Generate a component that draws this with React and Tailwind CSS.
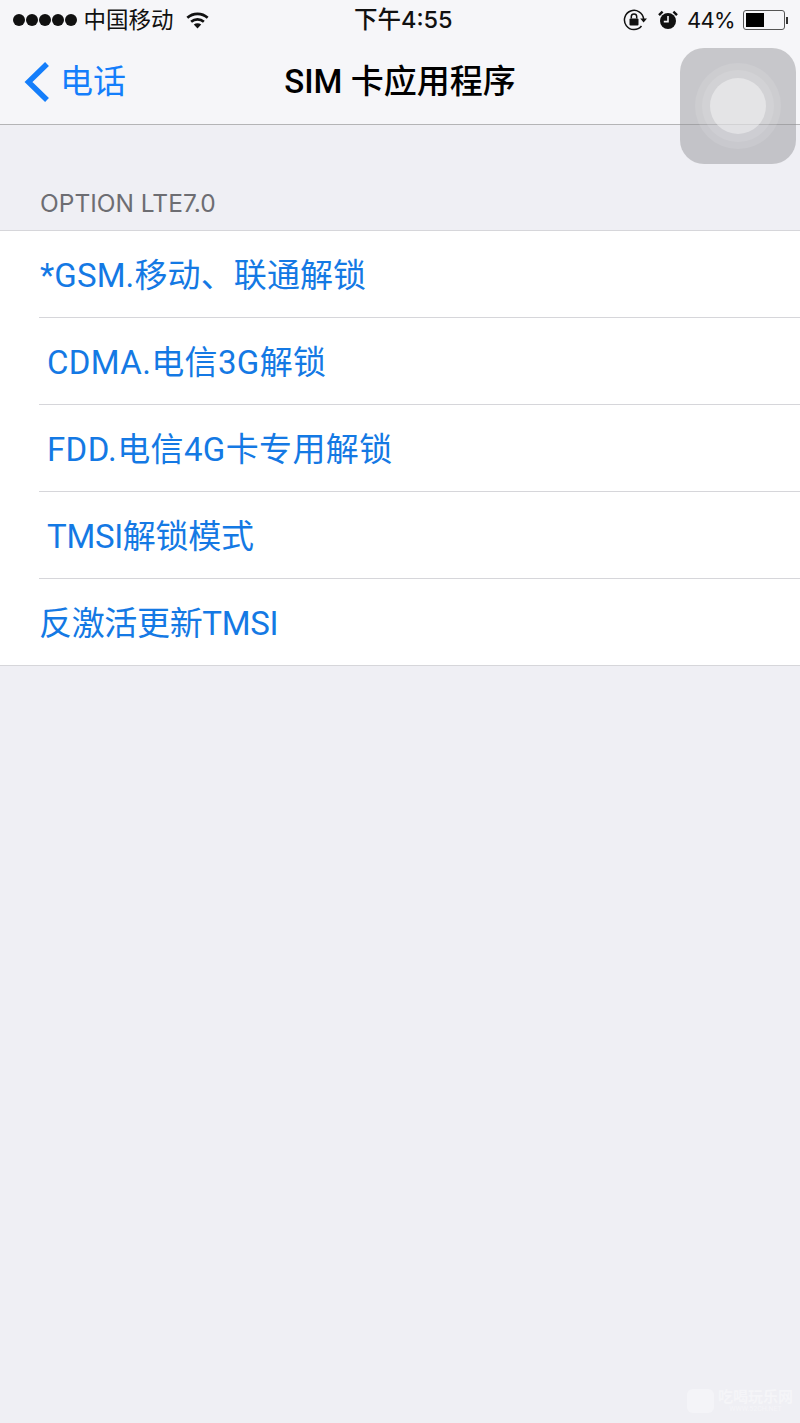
const FONT = 'font-["Roboto","Noto_Sans_CJK_SC",sans-serif]'

const rows = [
  { label: '*GSM.移动、联通解锁', pad: 'pl-[1px]', track: 'tracking-[0.12px]' },
  { label: 'CDMA.电信3G解锁', pad: 'pl-[8px]', track: 'tracking-[0.35px]' },
  { label: 'FDD.电信4G卡专用解锁', pad: 'pl-[8px]', track: 'tracking-[0.38px]' },
  { label: 'TMSI解锁模式', pad: 'pl-[8px]', track: 'tracking-[-0.3px]' },
  { label: '反激活更新TMSI', pad: 'pl-0', track: 'tracking-[-0.33px]' },
]

function Wifi() {
  return (
    <svg width="23" height="18" viewBox="0 0 26 20" fill="none" stroke="#111" strokeWidth="3">
      <path d="M1.5 7.5C8 1.5 18 1.5 24.5 7.5" />
      <path d="M5.8 12C10 8.3 16 8.3 20.2 12" />
      <path d="M13 19.5L8.8 15C11.2 13.2 14.8 13.2 17.2 15Z" fill="#111" stroke="none" />
    </svg>
  )
}

function RotationLock() {
  return (
    <svg width="24" height="22" viewBox="0 0 24 22" fill="none">
      <path d="M18.5 17A9.6 9.6 0 1 1 20.6 10" stroke="#111" strokeWidth="1.5" />
      <path d="M17.2 9.5H24L20.6 13.4Z" fill="#111" />
      <rect x="6.5" y="9.5" width="9" height="7" rx="1" fill="#111" />
      <path d="M8.3 9.5V7.6a2.7 2.7 0 0 1 5.4 0v1.9" stroke="#111" strokeWidth="1.5" />
    </svg>
  )
}

function Alarm() {
  return (
    <svg width="20" height="20" viewBox="0 0 20 20">
      <circle cx="10" cy="11" r="8" fill="#111" />
      <path d="M1 5.2L4.6 1.6 M15.4 1.6L19 5.2" stroke="#111" strokeWidth="2.4" />
      <path d="M10 6V11.6H5.8" stroke="#f5f5f8" strokeWidth="1.6" fill="none" />
    </svg>
  )
}

function AssistiveTouch() {
  return (
    <div className="absolute left-[680px] top-[48px] w-[116px] h-[116px] rounded-[24px] bg-[#8e8e93]/45 flex items-center justify-center">
      <div className="w-[86px] h-[86px] rounded-full bg-white/10 flex items-center justify-center">
        <div className="w-[72px] h-[72px] rounded-full bg-white/10 flex items-center justify-center">
          <div className="w-[56px] h-[56px] rounded-full bg-white/40" />
        </div>
      </div>
    </div>
  )
}

export default function App() {
  return (
    <div className={`relative w-[800px] h-[1423px] overflow-hidden bg-[#efeff4] ${FONT}`}>
      {/* Barre de statut + navigation */}
      <header className="h-[125px] bg-[#f6f6f9] border-b border-[#b4b4b6] flex flex-col">
        <div className="relative h-[40px] flex items-center justify-between pl-[13px] pr-[12px] text-[#111]">
          <div className="flex items-center">
            <div className="flex gap-[1.5px]">
              {[0, 1, 2, 3, 4].map((i) => (
                <span key={i} className="w-[11.5px] h-[11.5px] rounded-full bg-[#111]" />
              ))}
            </div>
            <span className="ml-[7px] text-[22.5px] leading-none">中国移动</span>
            <span className="ml-[12px] flex"><Wifi /></span>
          </div>
          <span className='absolute left-[354px] top-[6px] text-[23.5px] leading-[28px] font-medium font-["Inter","Noto_Sans_CJK_SC",sans-serif]'>下午4:55</span>
          <div className="flex items-center">
            <RotationLock />
            <span className="ml-[11px] flex"><Alarm /></span>
            <span className='ml-[9px] text-[22px] leading-none tracking-[-0.7px] font-["Inter",sans-serif]'>44%</span>
            <div className="ml-[8px] flex items-center">
              <div className="w-[42px] h-[20px] rounded-[3px] border border-[#555] p-[2px]">
                <div className="w-[18px] h-full bg-black" />
              </div>
              <span className="ml-[1px] w-[2px] h-[7px] bg-[#333]" />
            </div>
          </div>
        </div>
        <div className="relative flex-1 flex items-center justify-center">
          <div className="absolute left-[24px] top-[21px] flex items-center">
            <svg width="26" height="42" viewBox="0 0 26 42" fill="none" stroke="#147efb" strokeWidth="5.5">
              <path d="M23 3L4.5 21L23 39" />
            </svg>
            <span className="ml-[10px] text-[33px] leading-[42px] text-[#147efb]">电话</span>
          </div>
          <h1 className="text-[33px] leading-[42px] font-medium text-black">SIM 卡应用程序</h1>
        </div>
      </header>

      {/* Section */}
      <div className="h-[105px] flex items-end pl-[40px] pb-[12px]">
        <span className='text-[24.5px] leading-[30px] text-[#6d6d72] font-["Inter",sans-serif]'>OPTION LTE7.0</span>
      </div>
      <ul className="bg-white border-y border-[#d6d6da]">
        {rows.map((row, i) => (
          <li key={row.label} className="pl-[39px]">
            <div className={`flex items-center pt-[4px] ${row.pad} ${i < rows.length - 1 ? 'border-b border-[#d6d6da] h-[87px]' : 'h-[86px]'}`}>
              <span className={`text-[33px] leading-[42px] text-[#1479e4] whitespace-nowrap ${row.track}`}>{row.label}</span>
            </div>
          </li>
        ))}
      </ul>

      {/* Filigrane */}
      <div className="absolute right-[7px] bottom-[10px] flex items-center gap-[4px] text-[#f5f5f8]">
        <span className="w-[27px] h-[24px] rounded-[6px] bg-[#f4f4f8]" />
        <div className="flex flex-col items-center">
          <span className="text-[15px] leading-[15px] font-bold">吃喝玩乐网</span>
          <span className="text-[7px] leading-[8px]">WWW.52CH.NET</span>
        </div>
      </div>

      <AssistiveTouch />
    </div>
  )
}
